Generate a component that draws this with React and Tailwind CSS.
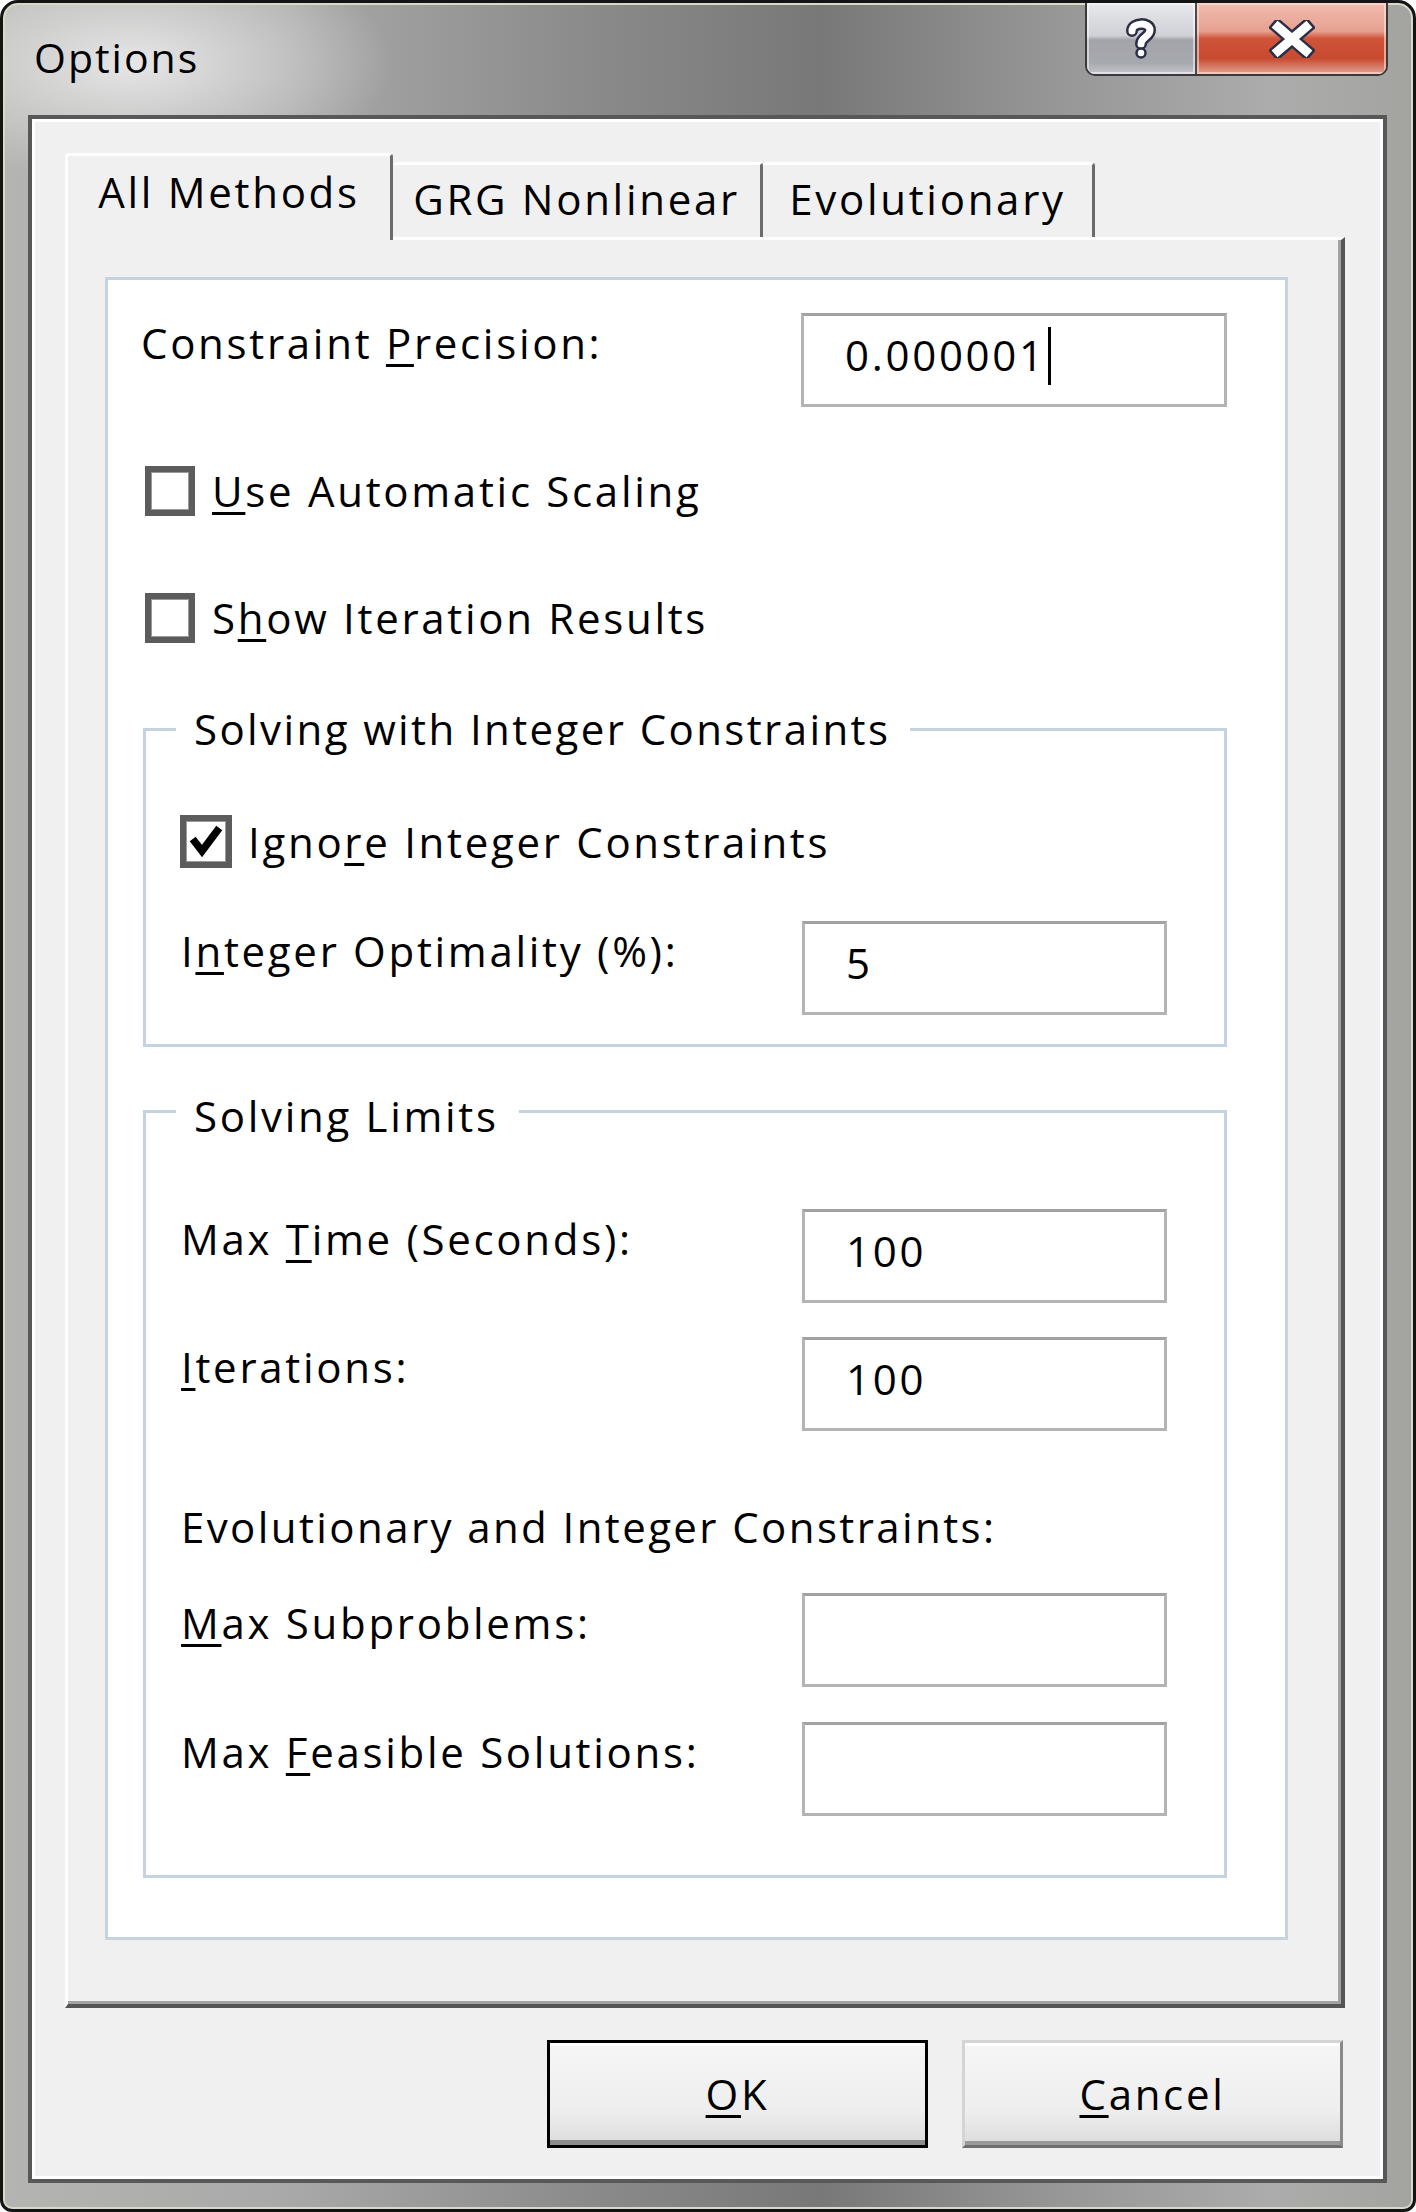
import React from "react";

const base =
  "font-['Open_Sans',sans-serif] text-[42px] leading-[42px] text-black whitespace-nowrap";
const txt = `${base} tracking-[2.7px]`;
const txtTight = `${base} tracking-[2.4px]`;

function Key({ children }) {
  return (
    <u className="underline underline-offset-[5px] decoration-[3px]">
      {children}
    </u>
  );
}

function TextBox({ value, caret, w }) {
  return (
    <div
      className={`${w} h-[94px] shrink-0 bg-white border-[3px] border-[#b4b4b4] border-t-[#a2a2a2] pl-[41px] pt-[18px] flex items-start`}
    >
      <span className={txt}>{value}</span>
      {caret && <span className="ml-[2px] mt-[-7px] w-[3px] h-[58px] bg-black" />}
    </div>
  );
}

function CheckBox({ checked, size }) {
  return (
    <div
      className={`${size} shrink-0 bg-white border-[6px] border-[#5c5c5c] shadow-[inset_0_0_0_1px_#9a9a9a] flex items-center justify-center`}
    >
      {checked && (
        <svg width="40" height="41" viewBox="0 0 40 41">
          <path
            d="M9 21 L16 30 L31 10"
            fill="none"
            stroke="#000"
            strokeWidth="7.5"
            strokeLinecap="square"
            strokeLinejoin="miter"
          />
        </svg>
      )}
    </div>
  );
}

function FieldRow({ label, box, labelW, boxW, className }) {
  return (
    <div className={`flex items-start ${className}`}>
      <div className={`${labelW} shrink-0 pt-[9px] ${txt}`}>{label}</div>
      {box(boxW)}
    </div>
  );
}

export default function App() {
  return (
    <div className="w-[1416px] h-[2212px] bg-white">
      {/* Window */}
      <div className="w-[1416px] h-[2212px] flex flex-col border-[3px] border-[#141414] rounded-t-[18px] rounded-b-[12px] overflow-hidden bg-[image:radial-gradient(ellipse_260px_120px_at_130px_60px,rgba(240,240,240,0.85),rgba(240,240,240,0)),linear-gradient(90deg,#b4b4b2_0%,#a9a9a9_20%,#8a8a8a_42%,#787878_58%,#979797_75%,#acacac_90%,#a3a3a0_100%)] shadow-[inset_0_0_0_2px_#d9d9c8]">
        {/* Title bar */}
        <div className="h-[112px] shrink-0 flex justify-between items-start">
          <div className="pl-[31px] pt-[33px] font-['Open_Sans',sans-serif] text-[41px] leading-[42px] tracking-[2px] text-black">
            Options
          </div>
          <div className="flex mr-[25px] h-[73px] border-[2px] border-t-0 border-[#3a3a3c] rounded-b-[10px] overflow-hidden">
            <div className="w-[110px] h-full flex items-center justify-center border-r-[2px] border-[#4a4a4e] bg-[linear-gradient(#e6e8ec_0%,#cfd1d6_46%,#a2a4aa_52%,#a7a9b0_85%,#c4c6cc_100%)] shadow-[inset_0_0_0_2px_rgba(255,255,255,0.5)]">
              <svg width="34" height="42" viewBox="0 0 34 42">
                <g fill="none" strokeLinecap="round" strokeLinejoin="round">
                  <path
                    d="M8 13 C8 4 26 4 26 12 C26 19 17 19 17 26"
                    stroke="#2a2f45"
                    strokeWidth="12"
                  />
                  <path
                    d="M8 13 C8 4 26 4 26 12 C26 19 17 19 17 26"
                    stroke="#fff"
                    strokeWidth="7"
                  />
                  <circle cx="17" cy="35" r="4.5" fill="#fff" stroke="#2a2f45" strokeWidth="2.5" />
                </g>
              </svg>
            </div>
            <div className="w-[189px] h-full flex items-center justify-center bg-[linear-gradient(#f2bcb0_0%,#e6a090_40%,#d0543a_50%,#c84a30_78%,#e2a494_100%)] shadow-[inset_0_0_0_2px_rgba(255,225,215,0.6)]">
              <svg width="46" height="38" viewBox="0 0 46 38">
                <g strokeLinecap="square">
                  <path d="M9 7 L37 31 M37 7 L9 31" stroke="#2a2f45" strokeWidth="14" />
                  <path d="M9 7 L37 31 M37 7 L9 31" stroke="#fff" strokeWidth="9" />
                </g>
              </svg>
            </div>
          </div>
        </div>

        {/* Client area */}
        <div className="ml-[25px] w-[1359px] h-[2068px] shrink-0 bg-[#f0f0f0] border-[4px] border-[#585858] shadow-[inset_0_0_0_3px_#ffffff] flex flex-col">
          {/* Tabs */}
          <div className="mt-[34px] ml-[33px] flex items-end">
            <div className={`relative z-10 -mb-[3px] w-[328px] h-[87px] bg-[#f0f0f0] border-l-[3px] border-t-[3px] border-r-[3px] border-white border-r-[#6b6b6b] rounded-t-[4px] flex justify-center pt-[15px] ${txt}`}>
              All Methods
            </div>
            <div className={`w-[370px] h-[75px] bg-[#f0f0f0] border-t-[3px] border-r-[3px] border-white border-r-[#6b6b6b] rounded-t-[4px] flex justify-center pt-[13px] ${txt}`}>
              GRG Nonlinear
            </div>
            <div className={`w-[332px] h-[75px] bg-[#f0f0f0] border-t-[3px] border-r-[3px] border-white border-r-[#6b6b6b] rounded-t-[4px] flex justify-center pt-[13px] ${txt}`}>
              Evolutionary
            </div>
          </div>

          {/* Tab panel */}
          <div className="ml-[33px] w-[1280px] h-[1771px] shrink-0 bg-[#f0f0f0] border-l-[3px] border-t-[3px] border-white border-r-[4px] border-b-[4px] border-r-[#555555] border-b-[#555555] shadow-[inset_-3px_-3px_0_#a2a2a2]">
            <div className="ml-[37px] mt-[37px] w-[1183px] h-[1663px] bg-white border-[3px] border-[#c5d3e0] flex flex-col">
              <FieldRow
                className="mt-[33px] pl-[33px]"
                labelW="w-[660px]"
                boxW="w-[426px]"
                label={
                  <>
                    Constraint <Key>P</Key>recision:
                  </>
                }
                box={(w) => <TextBox w={w} value="0.000001" caret />}
              />

              <div className="mt-[59px] pl-[37px] flex items-center gap-[17px]">
                <CheckBox size="w-[50px] h-[50px]" />
                <span className={txt}>
                  <Key>U</Key>se Automatic Scaling
                </span>
              </div>
              <div className="mt-[77px] pl-[37px] flex items-center gap-[17px]">
                <CheckBox size="w-[50px] h-[50px]" />
                <span className={txt}>
                  S<Key>h</Key>ow Iteration Results
                </span>
              </div>

              {/* Solving with Integer Constraints */}
              <fieldset className="mt-[65px] ml-[35px] w-[1084px] border-[3px] border-[#c5d3e0] pb-[29px]">
                <legend className={`ml-[30px] pl-[18px] pr-[20px] ${txtTight}`}>
                  Solving with Integer Constraints
                </legend>
                <div className="mt-[65px] pl-[34px] flex items-center gap-[16px]">
                  <CheckBox size="w-[52px] h-[53px]" checked />
                  <span className={txt}>
                    Igno<Key>r</Key>e Integer Constraints
                  </span>
                </div>
                <FieldRow
                  className="mt-[53px] pl-[35px]"
                  labelW="w-[621px]"
                  boxW="w-[365px]"
                  label={
                    <>
                      I<Key>n</Key>teger Optimality (%):
                    </>
                  }
                  box={(w) => <TextBox w={w} value="5" />}
                />
              </fieldset>

              {/* Solving Limits */}
              <fieldset className="mt-[43px] ml-[35px] w-[1084px] border-[3px] border-[#c5d3e0] pb-[59px]">
                <legend className={`relative top-[5px] ml-[30px] pl-[18px] pr-[20px] ${txt}`}>
                  Solving Limits
                </legend>
                <FieldRow
                  className="mt-[77px] pl-[35px]"
                  labelW="w-[621px]"
                  boxW="w-[365px]"
                  label={
                    <>
                      Max <Key>T</Key>ime (Seconds):
                    </>
                  }
                  box={(w) => <TextBox w={w} value="100" />}
                />
                <FieldRow
                  className="mt-[34px] pl-[35px]"
                  labelW="w-[621px]"
                  boxW="w-[365px]"
                  label={
                    <>
                      <Key>I</Key>terations:
                    </>
                  }
                  box={(w) => <TextBox w={w} value="100" />}
                />
                <div className={`mt-[75px] pl-[35px] ${txtTight}`}>
                  Evolutionary and Integer Constraints:
                </div>
                <FieldRow
                  className="mt-[45px] pl-[35px]"
                  labelW="w-[621px]"
                  boxW="w-[365px]"
                  label={
                    <>
                      <Key>M</Key>ax Subproblems:
                    </>
                  }
                  box={(w) => <TextBox w={w} value="" />}
                />
                <FieldRow
                  className="mt-[35px] pl-[35px]"
                  labelW="w-[621px]"
                  boxW="w-[365px]"
                  label={
                    <>
                      Max <Key>F</Key>easible Solutions:
                    </>
                  }
                  box={(w) => <TextBox w={w} value="" />}
                />
              </fieldset>
            </div>
          </div>

          {/* Buttons */}
          <div className="mt-[32px] pr-[40px] flex justify-end gap-[34px]">
            <button className={`w-[381px] h-[108px] border-[3px] border-black bg-[linear-gradient(#f6f6f6,#eeeeee_65%,#dcdcdc)] shadow-[inset_0_3px_0_#ffffff,inset_0_-5px_0_#8c8c8c] flex items-center justify-center ${txt}`}>
              <Key>O</Key>K
            </button>
            <button className={`w-[381px] h-[108px] border-[3px] border-[#d4d4d4] border-r-[#8a8a8a] border-b-[#6e6e6e] bg-[linear-gradient(#f6f6f6,#eeeeee_65%,#dcdcdc)] shadow-[inset_0_3px_0_#ffffff,inset_0_-4px_0_#9a9a9a] flex items-center justify-center ${txt}`}>
              <Key>C</Key>ancel
            </button>
          </div>
        </div>
      </div>
    </div>
  );
}
